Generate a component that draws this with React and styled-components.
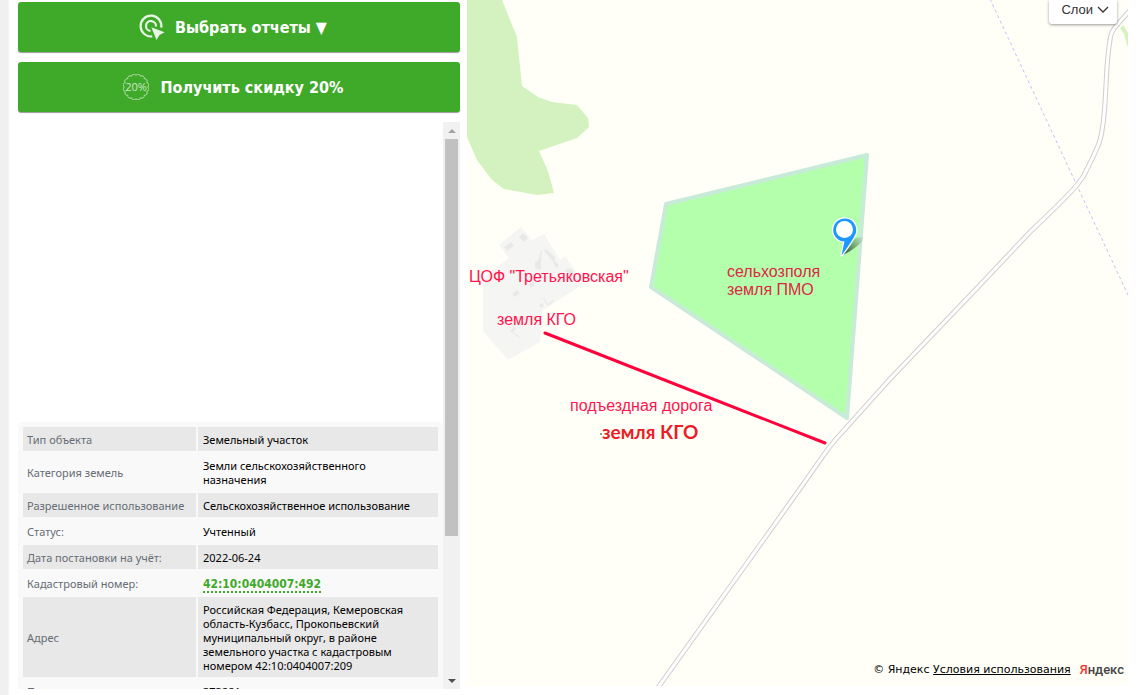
import React, { useState } from "react";
import styled, { createGlobalStyle } from "styled-components";

const GlobalStyle = createGlobalStyle`
  * {
    box-sizing: border-box;
  }
  body {
    margin: 0;
    background: #fff;
    font-family: "Noto Sans", Tahoma, sans-serif;
    font-size: 11px;
    line-height: 14px;
    color: #000;
  }
`;

const Page = styled.div`
  display: grid;
  grid-template-columns: 8px minmax(0, 459fr) minmax(0, 661fr) 12px;
  height: 100vh;
`;
const Edge = styled.div`
  background: #f0f0f0;
  box-shadow: 0 0 2px rgba(0, 0, 0, 0.15);
`;
const Sidebar = styled.aside`
  display: flex;
  flex-direction: column;
  gap: 10px;
  min-height: 0;
  padding: 2px 7px 6px 10px;
`;
const ActionButton = styled.button`
  display: flex;
  flex: none;
  align-items: center;
  justify-content: center;
  gap: ${(props) => props.$gap};
  height: 50px;
  padding: 0 12px 0 0;
  border: none;
  border-radius: 3px;
  background: #3fa92a;
  box-shadow: 0 1px 1px rgba(0, 0, 0, 0.4);
  color: #fff;
  font-family: "DejaVu Sans Condensed", Tahoma, sans-serif;
  font-size: 16px;
  font-weight: 700;
  cursor: pointer;
`;
const ScrollBox = styled.div`
  display: flex;
  flex: 1;
  min-height: 0;
`;
const ScrollContent = styled.div`
  flex: 1;
  min-width: 0;
  overflow-y: scroll;
  scrollbar-width: none;
`;
const ScrollTrack = styled.div`
  display: flex;
  flex-direction: column;
  flex: 0 0 17px;
  background: #f1f1f1;
`;
const ScrollArrow = styled.span`
  display: flex;
  align-items: center;
  justify-content: center;
  height: 17px;
  &::before {
    content: "";
    border: 4px solid transparent;
    border-top-width: ${(props) => (props.$down ? "4px" : "0")};
    border-bottom-width: ${(props) => (props.$down ? "0" : "4px")};
    border-top-color: #505050;
    border-bottom-color: #a3a3a3;
  }
`;
const ScrollRail = styled.div`
  flex: 1;
  padding: 0 2px;
`;
const ScrollThumb = styled.div`
  height: 74.5%;
  background: #c1c1c1;
`;
const Preview = styled.div`
  height: 300px;
`;
const Card = styled.div`
  padding: 3px;
  margin-bottom: 16px;
  border-radius: 5px;
  background: #f9f9f9;
`;
const InfoTable = styled.table`
  width: 100%;
  table-layout: fixed;
  border-spacing: 2px;
`;
const Row = styled.tr`
  &:nth-child(odd) {
    background: #e8e8e8;
  }
`;
const Label = styled.th`
  width: 173px;
  padding: 6px 4px 4px;
  color: #666c75;
  font-weight: 400;
  text-align: left;
  white-space: nowrap;
`;
const Value = styled.td`
  padding: 6px 16px 4px 5px;
`;
const CadLink = styled.a`
  border-bottom: 2px dotted #3fa92a;
  color: #3fa92a;
  font-family: "DejaVu Sans Condensed", Tahoma, sans-serif;
  font-size: 12px;
  font-weight: 700;
  text-decoration: none;
`;

const Map = styled.main`
  position: relative;
  min-width: 0;
  margin-bottom: 9px;
  overflow: hidden;
  background: #fffff7;
`;
const Terrain = styled.svg`
  display: block;
  width: 100%;
  height: 100%;
`;
const LayersButton = styled.button`
  position: absolute;
  top: 0;
  right: 11px;
  display: flex;
  align-items: center;
  gap: 4px;
  height: 24px;
  padding: 0 8px 5px 12px;
  border: none;
  border-radius: 0 0 3px 3px;
  background: #fff;
  box-shadow: 0 1px 3px rgba(0, 0, 0, 0.4);
  color: #333;
  font-family: "Liberation Sans", Arial, sans-serif;
  font-size: 13px;
  cursor: pointer;
`;
const MapNote = styled.span`
  position: absolute;
  top: ${(props) => props.$y}px;
  left: ${(props) => props.$x}px;
  color: ${(props) => props.$color || "#ff1450"};
  font-family: "Liberation Sans", Arial, sans-serif;
  font-size: 16px;
  line-height: 18px;
  white-space: nowrap;
`;
const BoldNote = styled(MapNote)`
  font-family: Lato, Calibri, sans-serif;
  font-size: 19px;
  font-weight: 700;
`;
const Copyright = styled.footer`
  position: absolute;
  right: 4px;
  bottom: 7px;
  display: flex;
  align-items: center;
  gap: 9px;
  font-family: "DejaVu Sans", Verdana, sans-serif;
  font-size: 11px;
  line-height: 18px;
`;
const TermsLink = styled.a`
  color: #000;
`;
const Brand = styled.a`
  display: inline-block;
  color: #444;
  font-family: Roboto, sans-serif;
  font-size: 13px;
  font-weight: 500;
  text-decoration: none;
  &::first-letter {
    color: #f33;
  }
`;

const details = [
  ["Тип объекта", "Земельный участок"],
  ["Категория земель", "Земли сельскохозяйственного назначения"],
  ["Разрешенное использование", "Сельскохозяйственное использование"],
  ["Статус:", "Учтенный"],
  ["Дата постановки на учёт:", "2022-06-24"],
  ["Кадастровый номер:", "42:10:0404007:492", true],
  [
    "Адрес",
    "Российская Федерация, Кемеровская область-Кузбасс, Прокопьевский муниципальный округ, в районе земельного участка с кадастровым номером 42:10:0404007:209",
  ],
  ["Площадь", "373281"],
];

const TargetIcon = () => (
  <svg width="26" height="26" viewBox="0 0 26 26" fill="none">
    <g stroke="#e8f6e5" strokeWidth="2.200">
      <path d="M13.300 22.400A10.400 10.400 0 1 1 22.300 13.600" />
      <path d="M11.500 17A5 5 0 1 1 17 12.500" />
    </g>
    <path d="M12.300 13.300l13.200 5-5 2.600-3 5.100z" fill="#e8f6e5" />
  </svg>
);

// badge outline made of small outward bumps
const bumps = 16;
const badgePath = Array.from({ length: bumps + 1 }, (_, i) => {
  const a = (i / bumps) * Math.PI * 2;
  const x = (13 + 11.6 * Math.cos(a)).toFixed(2);
  const y = (13 + 11.6 * Math.sin(a)).toFixed(2);
  return i === 0 ? `M${x} ${y}` : `A2.400 2.400 0 0 1 ${x} ${y}`;
}).join("");

const DiscountIcon = () => (
  <svg width="26" height="26" viewBox="0 0 26 26">
    <path d={badgePath} fill="none" stroke="#b5dfac" />
    <text
      x="13"
      y="17"
      textAnchor="middle"
      fill="#cdeac7"
      fontFamily="Open Sans, sans-serif"
      fontSize="11"
      fontWeight="400"
    >
      20%
    </text>
  </svg>
);

const Chevron = () => (
  <svg width="12" height="8" viewBox="0 0 12 8" fill="none">
    <path d="M1 1l5 5 5-5" stroke="#333" strokeWidth="1.300" />
  </svg>
);

const road =
  "M664 9L650 25Q644 31 643 40Q641 52 640 67L638 103Q636 130 633 140Q630 150 616 177L610 185Q600 197 563 232L513 285L423 379L369 439L361 449L320 507L190 689";

const MapDrawing = () => (
  <Terrain viewBox="0 0 661 686" preserveAspectRatio="xMinYMin slice">
    <defs>
      <linearGradient id="pinShadow" x1="0" y1="1" x2="1" y2="0">
        <stop offset="0" stopColor="#000" stopOpacity="0.7" />
        <stop offset="1" stopColor="#000" stopOpacity="0" />
      </linearGradient>
    </defs>
    {/* forest */}
    <path
      d="M0 0H35L50 37L55 86L71 97L85 102L110 105L121 118L122 127L110 138L72 151L81 171L87 193L70 195L37 189L25 180L10 160L0 137Z"
      fill="#d4f2bf"
    />
    <path d="M653 28L656 25L661 33V48L657 34Z" fill="#d4f2bf" />
    {/* factory grounds */}
    <path
      d="M32 245L54 227L65 240L77 234L93 260L98 256L115 280L115 285L76 310L73 342L41 360L16 331V278L42 258Z"
      fill="#f5f5f3"
    />
    <path
      d="M37 247l7-5 3 4-7 5zM52 237l4-4 5 5-4 4zM45 294l5-4 3 3-5 4zM68 261l3 0 3-11 1 0-1 11 0 9-6-2zM77 251l2-2 9 8 0 4 4 5-3 2-4-8zM98 270l5-2 4 4-5 3zM62 284l4-3 2 4-4 3zM72 305l3-2 2 3-3 2zM77 298l4 6 5-4 1 1-6 5-5-7zM43 331l5-4 1 2-3 3 7 5-1 1z"
      fill="#e9e9e8"
    />
    <path
      d="M523 -1L661 295"
      stroke="#c5bdfa"
      strokeWidth="1"
      strokeDasharray="3 3"
    />
    <path d={road} stroke="#cfcfcf" strokeWidth="5" fill="none" />
    <path d={road} stroke="#fff" strokeWidth="3" fill="none" />
    {/* parcel */}
    <path
      d="M199 204L400 155L380 418L184 287Z"
      fill="#b4ffac"
      stroke="#c7ebd8"
      strokeWidth="4"
      strokeLinejoin="round"
    />
    <path
      d="M78 333L358 443"
      stroke="#ff003c"
      strokeWidth="3"
      strokeLinecap="round"
    />
    <path d="M133 434h2" stroke="#333" strokeWidth="1" />
    {/* placemark */}
    <path
      d="M376 255L382 244Q390 235 397 237Q394 246 376 255Z"
      fill="url(#pinShadow)"
    />
    <path
      d="M374.500 255.500L377.500 241.500A11.500 11.500 0 1 1 388.500 234Q386 240 374.500 255.500Z"
      fill="#1e98ff"
      stroke="#fff"
      strokeWidth="2.500"
      strokeLinejoin="round"
      paintOrder="stroke"
    />
    <circle cx="377.500" cy="229.500" r="8.500" fill="#fff" />
  </Terrain>
);

const App = () => {
  const [offset, setOffset] = useState(0);

  const onScroll = (e) => {
    const { scrollTop, scrollHeight, clientHeight } = e.target;
    const rail = clientHeight - 34;
    const range = scrollHeight - clientHeight;
    setOffset(range > 0 ? (scrollTop / range) * rail * 0.255 : 0);
  };

  return (
    <>
      <GlobalStyle />
      <Page>
        <Edge />
        <Sidebar>
          <ActionButton type="button" $gap="10px">
            <TargetIcon />
            Выбрать отчеты ▼
          </ActionButton>
          <ActionButton type="button" $gap="12px">
            <DiscountIcon />
            Получить скидку 20%
          </ActionButton>
          <ScrollBox>
            <ScrollContent onScroll={onScroll}>
              <Preview />
              <Card>
                <InfoTable>
                  <tbody>
                    {details.map(([label, value, isLink]) => (
                      <Row key={label}>
                        <Label scope="row">{label}</Label>
                        <Value>
                          {isLink ? <CadLink href="#cad">{value}</CadLink> : value}
                        </Value>
                      </Row>
                    ))}
                  </tbody>
                </InfoTable>
              </Card>
            </ScrollContent>
            <ScrollTrack aria-hidden="true">
              <ScrollArrow />
              <ScrollRail>
                <ScrollThumb style={{ transform: `translateY(${offset}px)` }} />
              </ScrollRail>
              <ScrollArrow $down />
            </ScrollTrack>
          </ScrollBox>
        </Sidebar>
        <Map>
          <MapDrawing />
          <MapNote $x={2} $y={268}>ЦОФ "Третьяковская"</MapNote>
          <MapNote $x={30} $y={311}>земля КГО</MapNote>
          <MapNote $x={260} $y={263} $color="#dc2846">
            сельхозполя
            <br />
            земля ПМО
          </MapNote>
          <MapNote $x={103} $y={397}>подъездная дорога</MapNote>
          <BoldNote $x={135} $y={423} $color="#ed1c24">земля КГО</BoldNote>
          <LayersButton type="button">
            Слои
            <Chevron />
          </LayersButton>
          <Copyright>
            <span>
              © Яндекс <TermsLink href="#terms">Условия использования</TermsLink>
            </span>
            <Brand href="#yandex">Яндекс</Brand>
          </Copyright>
        </Map>
      </Page>
    </>
  );
};

export default App;
